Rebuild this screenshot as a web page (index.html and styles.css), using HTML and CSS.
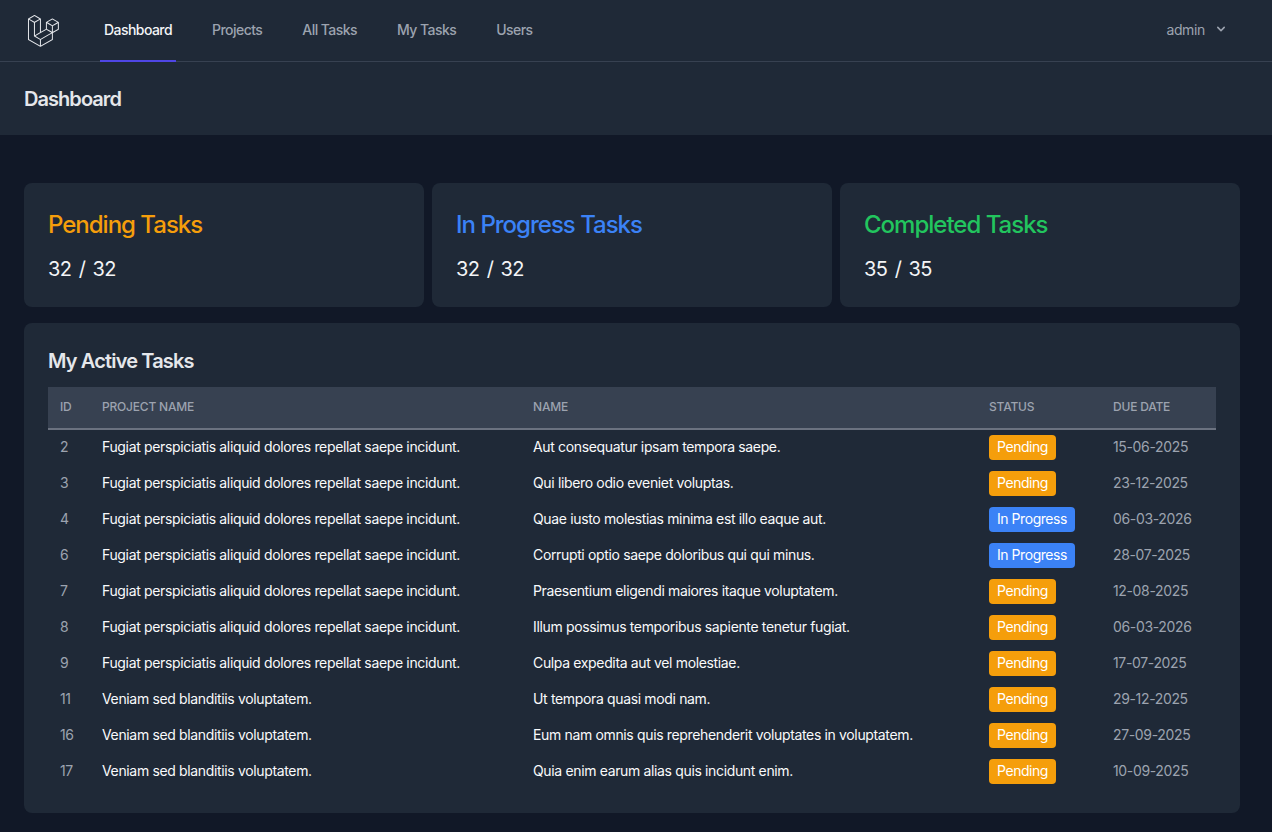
FILE: index.html
```html
<!DOCTYPE html>
<html lang="en">
<head>
  <meta charset="UTF-8">
  <title>Dashboard</title>
  <link rel="stylesheet" href="styles.css">
</head>
<body>
  <nav class="topnav">
    <svg class="logo" viewBox="0 0 316 316" xmlns="http://www.w3.org/2000/svg">
      <path d="M305.8 81.125C305.77 80.995 305.69 80.885 305.65 80.755C305.56 80.525 305.49 80.285 305.37 80.075C305.29 79.935 305.17 79.815 305.07 79.685C304.94 79.515 304.83 79.325 304.68 79.175C304.55 79.045 304.39 78.955 304.25 78.845C304.09 78.715 303.95 78.575 303.77 78.475L251.32 48.275C249.97 47.495 248.31 47.495 246.96 48.275L194.51 78.475C194.33 78.575 194.19 78.725 194.03 78.845C193.89 78.955 193.73 79.045 193.6 79.175C193.45 79.325 193.34 79.515 193.21 79.685C193.11 79.815 192.99 79.935 192.91 80.075C192.79 80.285 192.71 80.525 192.63 80.755C192.58 80.875 192.51 80.995 192.48 81.125C192.38 81.495 192.33 81.875 192.33 82.265V139.625L148.62 164.795V52.575C148.62 52.185 148.57 51.805 148.47 51.435C148.44 51.305 148.36 51.195 148.32 51.065C148.23 50.835 148.16 50.595 148.04 50.385C147.96 50.245 147.84 50.125 147.74 49.995C147.61 49.825 147.5 49.635 147.35 49.485C147.22 49.355 147.06 49.265 146.92 49.155C146.76 49.025 146.62 48.885 146.44 48.785L93.99 18.585C92.64 17.805 90.98 17.805 89.63 18.585L37.18 48.785C37 48.885 36.86 49.035 36.7 49.155C36.56 49.265 36.4 49.355 36.27 49.485C36.12 49.635 36.01 49.825 35.88 49.995C35.78 50.125 35.66 50.245 35.58 50.385C35.46 50.595 35.38 50.835 35.3 51.065C35.25 51.185 35.18 51.305 35.15 51.435C35.05 51.805 35 52.185 35 52.575V232.235C35 233.795 35.84 235.245 37.19 236.025L142.1 296.425C142.33 296.555 142.58 296.635 142.82 296.725C142.93 296.765 143.04 296.835 143.16 296.865C143.53 296.965 143.9 297.015 144.28 297.015C144.66 297.015 145.03 296.965 145.4 296.865C145.5 296.835 145.59 296.775 145.69 296.745C145.95 296.655 146.21 296.565 146.45 296.435L251.36 236.035C252.72 235.255 253.55 233.815 253.55 232.245V174.885L303.81 145.945C305.17 145.165 306 143.725 306 142.155V82.265C305.95 81.875 305.89 81.495 305.8 81.125ZM144.2 227.205L100.57 202.515L146.39 176.135L196.66 147.195L240.33 172.335L208.29 190.625L144.2 227.205ZM244.75 114.995V164.795L226.39 154.225L201.03 139.625V89.825L219.39 100.395L244.75 114.995ZM249.12 57.105L292.81 82.265L249.12 107.425L205.43 82.265L249.12 57.105ZM114.49 184.425L96.13 194.995V85.305L121.49 70.705L139.85 60.135V169.815L114.49 184.425ZM91.76 27.425L135.45 52.585L91.76 77.745L48.07 52.585L91.76 27.425ZM43.67 60.135L62.03 70.705L87.39 85.305V202.545V202.555V202.565C87.39 202.735 87.44 202.895 87.46 203.055C87.49 203.265 87.49 203.485 87.55 203.695V203.705C87.6 203.875 87.69 204.035 87.76 204.195C87.84 204.375 87.89 204.575 87.99 204.745C87.99 204.745 87.99 204.755 88 204.755C88.09 204.905 88.22 205.035 88.33 205.175C88.45 205.335 88.55 205.495 88.69 205.635L88.7 205.645C88.82 205.765 88.98 205.855 89.12 205.965C89.28 206.085 89.42 206.225 89.59 206.325C89.6 206.325 89.6 206.325 89.61 206.335C89.62 206.335 89.62 206.345 89.63 206.345L139.87 234.775V285.065L43.67 229.705V60.135ZM244.75 229.705L148.58 285.075V234.775L219.8 194.115L244.75 179.875V229.705ZM297.2 139.625L253.49 164.795V114.995L278.85 100.395L297.21 89.825V139.625H297.2Z"/>
    </svg>
    <div class="nav-links">
      <a class="nav-link active" href="#">Dashboard</a>
      <a class="nav-link" href="#">Projects</a>
      <a class="nav-link" href="#">All Tasks</a>
      <a class="nav-link" href="#">My Tasks</a>
      <a class="nav-link" href="#">Users</a>
    </div>
    <div class="user-menu">
      <span>admin</span>
      <svg class="chevron" viewBox="0 0 20 20" xmlns="http://www.w3.org/2000/svg">
        <path fill-rule="evenodd" clip-rule="evenodd" d="M5.293 7.293a1 1 0 011.414 0L10 10.586l3.293-3.293a1 1 0 111.414 1.414l-4 4a1 1 0 01-1.414 0l-4-4a1 1 0 010-1.414z"/>
      </svg>
    </div>
  </nav>

  <header class="page-header">
    <h2>Dashboard</h2>
  </header>

  <main class="content">
    <section class="stats">
      <div class="card stat">
        <h3 class="stat-title pending">Pending Tasks</h3>
        <p class="stat-count">32 / 32</p>
      </div>
      <div class="card stat">
        <h3 class="stat-title progress">In Progress Tasks</h3>
        <p class="stat-count">32 / 32</p>
      </div>
      <div class="card stat">
        <h3 class="stat-title completed">Completed Tasks</h3>
        <p class="stat-count">35 / 35</p>
      </div>
    </section>

    <section class="card tasks">
      <h3>My Active Tasks</h3>
      <table>
        <colgroup>
          <col class="col-id">
          <col class="col-project">
          <col class="col-name">
          <col class="col-status">
          <col class="col-due">
        </colgroup>
        <thead>
          <tr>
            <th>ID</th>
            <th>Project Name</th>
            <th>Name</th>
            <th>Status</th>
            <th>Due Date</th>
          </tr>
        </thead>
        <tbody>
          <tr>
            <td class="muted">2</td>
            <td>Fugiat perspiciatis aliquid dolores repellat saepe incidunt.</td>
            <td>Aut consequatur ipsam tempora saepe.</td>
            <td><span class="badge pending-bg">Pending</span></td>
            <td class="muted">15-06-2025</td>
          </tr>
          <tr>
            <td class="muted">3</td>
            <td>Fugiat perspiciatis aliquid dolores repellat saepe incidunt.</td>
            <td>Qui libero odio eveniet voluptas.</td>
            <td><span class="badge pending-bg">Pending</span></td>
            <td class="muted">23-12-2025</td>
          </tr>
          <tr>
            <td class="muted">4</td>
            <td>Fugiat perspiciatis aliquid dolores repellat saepe incidunt.</td>
            <td>Quae iusto molestias minima est illo eaque aut.</td>
            <td><span class="badge progress-bg">In Progress</span></td>
            <td class="muted">06-03-2026</td>
          </tr>
          <tr>
            <td class="muted">6</td>
            <td>Fugiat perspiciatis aliquid dolores repellat saepe incidunt.</td>
            <td>Corrupti optio saepe doloribus qui qui minus.</td>
            <td><span class="badge progress-bg">In Progress</span></td>
            <td class="muted">28-07-2025</td>
          </tr>
          <tr>
            <td class="muted">7</td>
            <td>Fugiat perspiciatis aliquid dolores repellat saepe incidunt.</td>
            <td>Praesentium eligendi maiores itaque voluptatem.</td>
            <td><span class="badge pending-bg">Pending</span></td>
            <td class="muted">12-08-2025</td>
          </tr>
          <tr>
            <td class="muted">8</td>
            <td>Fugiat perspiciatis aliquid dolores repellat saepe incidunt.</td>
            <td>Illum possimus temporibus sapiente tenetur fugiat.</td>
            <td><span class="badge pending-bg">Pending</span></td>
            <td class="muted">06-03-2026</td>
          </tr>
          <tr>
            <td class="muted">9</td>
            <td>Fugiat perspiciatis aliquid dolores repellat saepe incidunt.</td>
            <td>Culpa expedita aut vel molestiae.</td>
            <td><span class="badge pending-bg">Pending</span></td>
            <td class="muted">17-07-2025</td>
          </tr>
          <tr>
            <td class="muted">11</td>
            <td>Veniam sed blanditiis voluptatem.</td>
            <td>Ut tempora quasi modi nam.</td>
            <td><span class="badge pending-bg">Pending</span></td>
            <td class="muted">29-12-2025</td>
          </tr>
          <tr>
            <td class="muted">16</td>
            <td>Veniam sed blanditiis voluptatem.</td>
            <td>Eum nam omnis quis reprehenderit voluptates in voluptatem.</td>
            <td><span class="badge pending-bg">Pending</span></td>
            <td class="muted">27-09-2025</td>
          </tr>
          <tr>
            <td class="muted">17</td>
            <td>Veniam sed blanditiis voluptatem.</td>
            <td>Quia enim earum alias quis incidunt enim.</td>
            <td><span class="badge pending-bg">Pending</span></td>
            <td class="muted">10-09-2025</td>
          </tr>
        </tbody>
      </table>
    </section>
  </main>
</body>
</html>
```

FILE: styles.css
```css
* {
  box-sizing: border-box;
}
body {
  margin: 0;
  background: #111827;
  color: #e5e7eb;
  font-family: Inter, "Noto Sans", sans-serif;
  font-size: 14px;
  letter-spacing: -0.35px;
}
h2, h3, p {
  margin: 0;
}

.topnav {
  display: flex;
  align-items: center;
  height: 62px;
  padding: 0 43px 0 24px;
  background: #1f2937;
  border-bottom: 1px solid #374151;
}
.logo {
  width: 36px;
  height: 36px;
  fill: #e5e7eb;
}
.nav-links {
  display: flex;
  align-items: stretch;
  align-self: stretch;
  gap: 32px;
  margin-left: 40px;
  margin-bottom: -1px;
}
.nav-link {
  display: flex;
  align-items: center;
  padding: 0 4px 2px;
  border-bottom: 2px solid transparent;
  color: #9ca3af;
  text-decoration: none;
  font-weight: 500;
  letter-spacing: -0.55px;
}
.nav-link.active {
  border-bottom-color: #4f46e5;
  color: #f3f4f6;
}
.user-menu {
  display: flex;
  align-items: center;
  gap: 8px;
  margin-left: auto;
  padding-bottom: 3px;
  color: #9ca3af;
  font-weight: 400;
}
.chevron {
  width: 16px;
  height: 16px;
  fill: currentColor;
}

.page-header {
  height: 73px;
  padding: 0 24px;
  display: flex;
  align-items: center;
  background: #1f2937;
}
.page-header h2 {
  font-size: 20px;
  line-height: 28px;
  font-weight: 600;
  letter-spacing: -0.95px;
  color: #e5e7eb;
}

.content {
  padding: 48px 32px 48px 24px;
}
.card {
  background: #1f2937;
  border-radius: 8px;
  padding: 24px;
}
.stats {
  display: grid;
  grid-template-columns: repeat(3, 1fr);
  gap: 8px;
}
.stat {
  height: 124px;
}
.stat-title {
  font-size: 24px;
  line-height: 35px;
  font-weight: 500;
  letter-spacing: -1px;
}
.stat-count {
  margin-top: 12px;
  font-size: 20px;
  line-height: 30px;
  color: #f3f4f6;
  letter-spacing: -0.5px;
  word-spacing: 2px;
}
.pending {
  color: #f59e0b;
}
.progress {
  color: #3b82f6;
}
.completed {
  color: #22c55e;
}

.tasks {
  margin-top: 16px;
}
.tasks h3 {
  font-size: 20px;
  line-height: 28px;
  font-weight: 600;
  letter-spacing: -0.85px;
  margin-bottom: 12px;
}
table {
  width: 100%;
  table-layout: fixed;
  border-collapse: collapse;
}
.col-id { width: 42px; }
.col-project { width: 431px; }
.col-name { width: 456px; }
.col-status { width: 124px; }
.col-due { width: 115px; }
th {
  height: 42px;
  padding: 0 12px 2px;
  background: #374151;
  border-bottom: 2px solid #6b7280;
  color: #9ca3af;
  font-size: 12px;
  font-weight: 500;
  letter-spacing: -0.2px;
  text-align: left;
  text-transform: uppercase;
}
td {
  height: 36px;
  padding: 0 12px 2px;
  color: #f9fafb;
  font-size: 14px;
  white-space: nowrap;
}
td.muted {
  color: #9ca3af;
}
.badge {
  display: inline-block;
  margin: 1px 0 -1px;
  padding: 0 8px 1px;
  border-radius: 4px;
  color: #fff;
  line-height: 24px;
  letter-spacing: -0.45px;
  vertical-align: middle;
}
.pending-bg {
  background: #f59e0b;
}
.progress-bg {
  background: #3b82f6;
}
```
